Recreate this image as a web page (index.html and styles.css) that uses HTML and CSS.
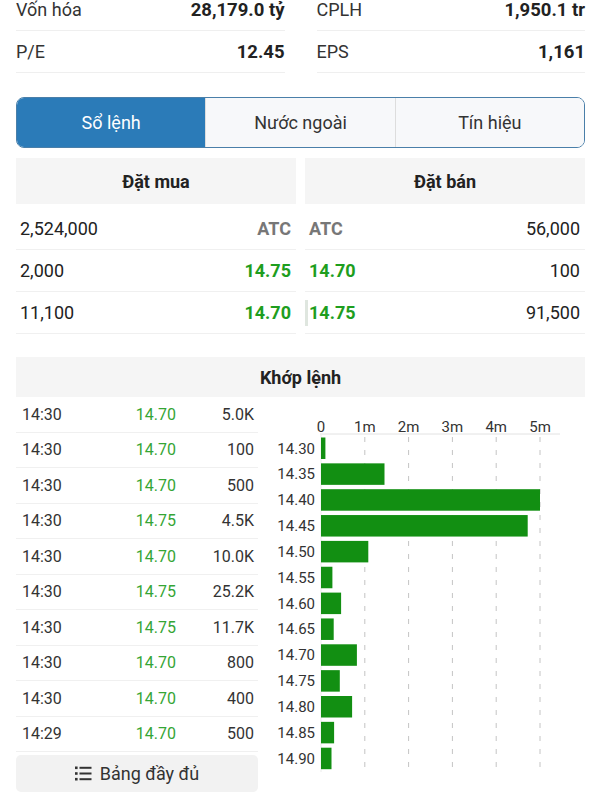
FILE: index.html
```html
<!DOCTYPE html>
<html lang="vi">
<head>
    <meta charset="UTF-8">
    <meta name="viewport" content="width=device-width, initial-scale=1.0">
    <title>Sổ lệnh</title>
    <link rel="stylesheet" href="styles.css">
</head>
<body>
    <div class="stats">
        <div class="stat"><span class="stat-label">Vốn hóa</span><span class="stat-value">28,179.0 tỷ</span></div>
        <div class="stat"><span class="stat-label">CPLH</span><span class="stat-value">1,950.1 tr</span></div>
        <div class="stat"><span class="stat-label">P/E</span><span class="stat-value">12.45</span></div>
        <div class="stat"><span class="stat-label">EPS</span><span class="stat-value">1,161</span></div>
    </div>

    <div class="tabs">
        <div class="tab active">Sổ lệnh</div>
        <div class="tab">Nước ngoài</div>
        <div class="tab">Tín hiệu</div>
    </div>

    <div class="book">
        <div class="book-side">
            <div class="section-head">Đặt mua</div>
            <div class="book-row"><span>2,524,000</span><span class="atc">ATC</span></div>
            <div class="book-row"><span>2,000</span><span class="up">14.75</span></div>
            <div class="book-row"><span>11,100</span><span class="up">14.70</span></div>
        </div>
        <div class="book-side">
            <div class="section-head">Đặt bán</div>
            <div class="book-row"><span class="atc">ATC</span><span>56,000</span></div>
            <div class="book-row"><span class="up">14.70</span><span>100</span></div>
            <div class="book-row bar-row"><span class="up"><i class="vol-bar"></i>14.75</span><span>91,500</span></div>
        </div>
    </div>

    <div class="section-head match-head">Khớp lệnh</div>

    <div class="match-body">
        <div class="trades">
            <div class="trade-row"><span>14:30</span><span class="price">14.70</span><span class="vol">5.0K</span></div>
            <div class="trade-row"><span>14:30</span><span class="price">14.70</span><span class="vol">100</span></div>
            <div class="trade-row"><span>14:30</span><span class="price">14.70</span><span class="vol">500</span></div>
            <div class="trade-row"><span>14:30</span><span class="price">14.75</span><span class="vol">4.5K</span></div>
            <div class="trade-row"><span>14:30</span><span class="price">14.70</span><span class="vol">10.0K</span></div>
            <div class="trade-row"><span>14:30</span><span class="price">14.75</span><span class="vol">25.2K</span></div>
            <div class="trade-row"><span>14:30</span><span class="price">14.75</span><span class="vol">11.7K</span></div>
            <div class="trade-row"><span>14:30</span><span class="price">14.70</span><span class="vol">800</span></div>
            <div class="trade-row"><span>14:30</span><span class="price">14.70</span><span class="vol">400</span></div>
            <div class="trade-row"><span>14:29</span><span class="price">14.70</span><span class="vol">500</span></div>

            <div class="full-button">
                <svg width="17" height="17" viewBox="0 0 17 17">
                    <g fill="#333">
                        <rect x="0" y="1.5" width="2.6" height="2.6"/>
                        <rect x="0" y="7.2" width="2.6" height="2.6"/>
                        <rect x="0" y="12.9" width="2.6" height="2.6"/>
                        <rect x="4.5" y="1.8" width="12" height="2"/>
                        <rect x="4.5" y="7.5" width="12" height="2"/>
                        <rect x="4.5" y="13.2" width="12" height="2"/>
                    </g>
                </svg>
                <span>Bảng đầy đủ</span>
            </div>
        </div>

        <div class="chart">
            <svg id="chart" width="315" height="400" viewBox="0 0 315 400"></svg>
        </div>
    </div>

    <script>
        // khối lượng khớp theo giá (triệu cp)
        const volumes = [
            ['14.30', 0.1], ['14.35', 1.45], ['14.40', 5.0], ['14.45', 4.72],
            ['14.50', 1.08], ['14.55', 0.26], ['14.60', 0.46], ['14.65', 0.29],
            ['14.70', 0.82], ['14.75', 0.43], ['14.80', 0.71], ['14.85', 0.3],
            ['14.90', 0.24]
        ];

        const svg = document.getElementById('chart');
        const x0 = 51;
        const unit = 43.8;
        const axisY = 37;
        const bottom = 375;
        let html = '';

        // trục và lưới
        html += '<line x1="50" y1="' + axisY + '" x2="290" y2="' + axisY + '" stroke="#e2e2e2" stroke-width="1"/>';
        html += '<line x1="' + x0 + '" y1="' + axisY + '" x2="' + x0 + '" y2="' + bottom + '" stroke="#ececec" stroke-width="1"/>';
        ['0', '1m', '2m', '3m', '4m', '5m'].forEach(function(label, i) {
            const x = x0 + unit * i;
            html += '<text class="axis-label" x="' + x + '" y="35" text-anchor="middle">' + label + '</text>';
            if (i > 0) {
                html += '<line x1="' + x + '" y1="' + (axisY + 3) + '" x2="' + x + '" y2="' + bottom + '" stroke="#c4c4c4" stroke-width="1" stroke-dasharray="5 8"/>';
            }
        });

        volumes.forEach(function(item, i) {
            const top = 40.5 + 25.85 * i;
            html += '<rect x="' + x0 + '" y="' + top + '" width="' + (item[1] * unit).toFixed(1) + '" height="21.5" fill="#128f12"/>';
            html += '<text class="axis-label" x="45" y="' + (top + 16) + '" text-anchor="end">' + item[0] + '</text>';
        });

        svg.innerHTML = html;
    </script>
</body>
</html>
```

FILE: styles.css
```css
* { margin: 0; padding: 0; box-sizing: border-box; }

body {
    font-family: Roboto, 'Noto Sans', sans-serif;
    background: #ffffff;
    color: #333333;
    padding: 0 15px 0 16px;
    overflow: hidden;
}

.stats {
    display: grid;
    grid-template-columns: 1fr 1fr;
    column-gap: 32px;
    margin-top: -11px;
}

.stat {
    display: flex;
    justify-content: space-between;
    align-items: center;
    height: 42px;
    border-bottom: 1px solid #efefef;
    font-size: 18px;
}

.stat-label {
    color: #333333;
}

.stat-value {
    font-size: 18.5px;
    font-weight: 700;
    color: #222222;
}

.tabs {
    display: flex;
    margin-top: 24px;
    height: 51px;
    border: 1.5px solid #4a7fa9;
    border-radius: 8px;
    overflow: hidden;
}

.tab {
    flex: 1;
    display: flex;
    align-items: center;
    justify-content: center;
    background: #f7f8fa;
    border-left: 1px solid #dddddd;
    font-size: 18px;
    color: #333333;
}

.tab:first-child {
    border-left: none;
}

.tab.active {
    background: #2b7bb8;
    color: #ffffff;
}

.book {
    display: grid;
    grid-template-columns: 1fr 1fr;
    column-gap: 9px;
    margin-top: 10px;
}

.section-head {
    display: flex;
    align-items: center;
    justify-content: center;
    height: 46px;
    background: #f5f5f5;
    font-size: 18px;
    font-weight: 700;
    color: #222222;
    margin-bottom: 4px;
}

.book-row {
    display: flex;
    justify-content: space-between;
    align-items: center;
    height: 42px;
    padding: 0 5px 0 4px;
    border-bottom: 1px solid #f0f0f0;
    font-size: 18px;
    color: #222222;
}

.bar-row {
    padding-left: 0;
}

.vol-bar {
    display: inline-block;
    width: 3px;
    height: 26px;
    margin-right: 1px;
    vertical-align: middle;
    background: #dfe6df;
}

.up {
    display: flex;
    align-items: center;
    color: #1e9e1e;
    font-weight: 700;
}

.atc {
    color: #777777;
    font-weight: 700;
}

.match-head {
    margin-top: 23px;
    height: 40px;
    margin-bottom: 0;
}

.match-body {
    display: grid;
    grid-template-columns: 242px 1fr;
    column-gap: 12px;
}

.trade-row {
    display: grid;
    grid-template-columns: 1fr 70px 78px;
    align-items: center;
    height: 35.5px;
    padding: 0 4px 0 6px;
    border-bottom: 1px solid #f0f0f0;
    font-size: 16px;
    color: #333333;
}

.price {
    text-align: right;
    color: #35a535;
}

.vol {
    text-align: right;
}

.full-button {
    display: flex;
    align-items: center;
    justify-content: center;
    gap: 8px;
    margin-top: 3px;
    height: 37px;
    background: #f2f2f2;
    border-radius: 5px;
    font-size: 18px;
    color: #333333;
}

.chart svg {
    display: block;
}

.axis-label {
    font-family: Roboto, sans-serif;
    font-size: 15px;
    fill: #333333;
}
```
